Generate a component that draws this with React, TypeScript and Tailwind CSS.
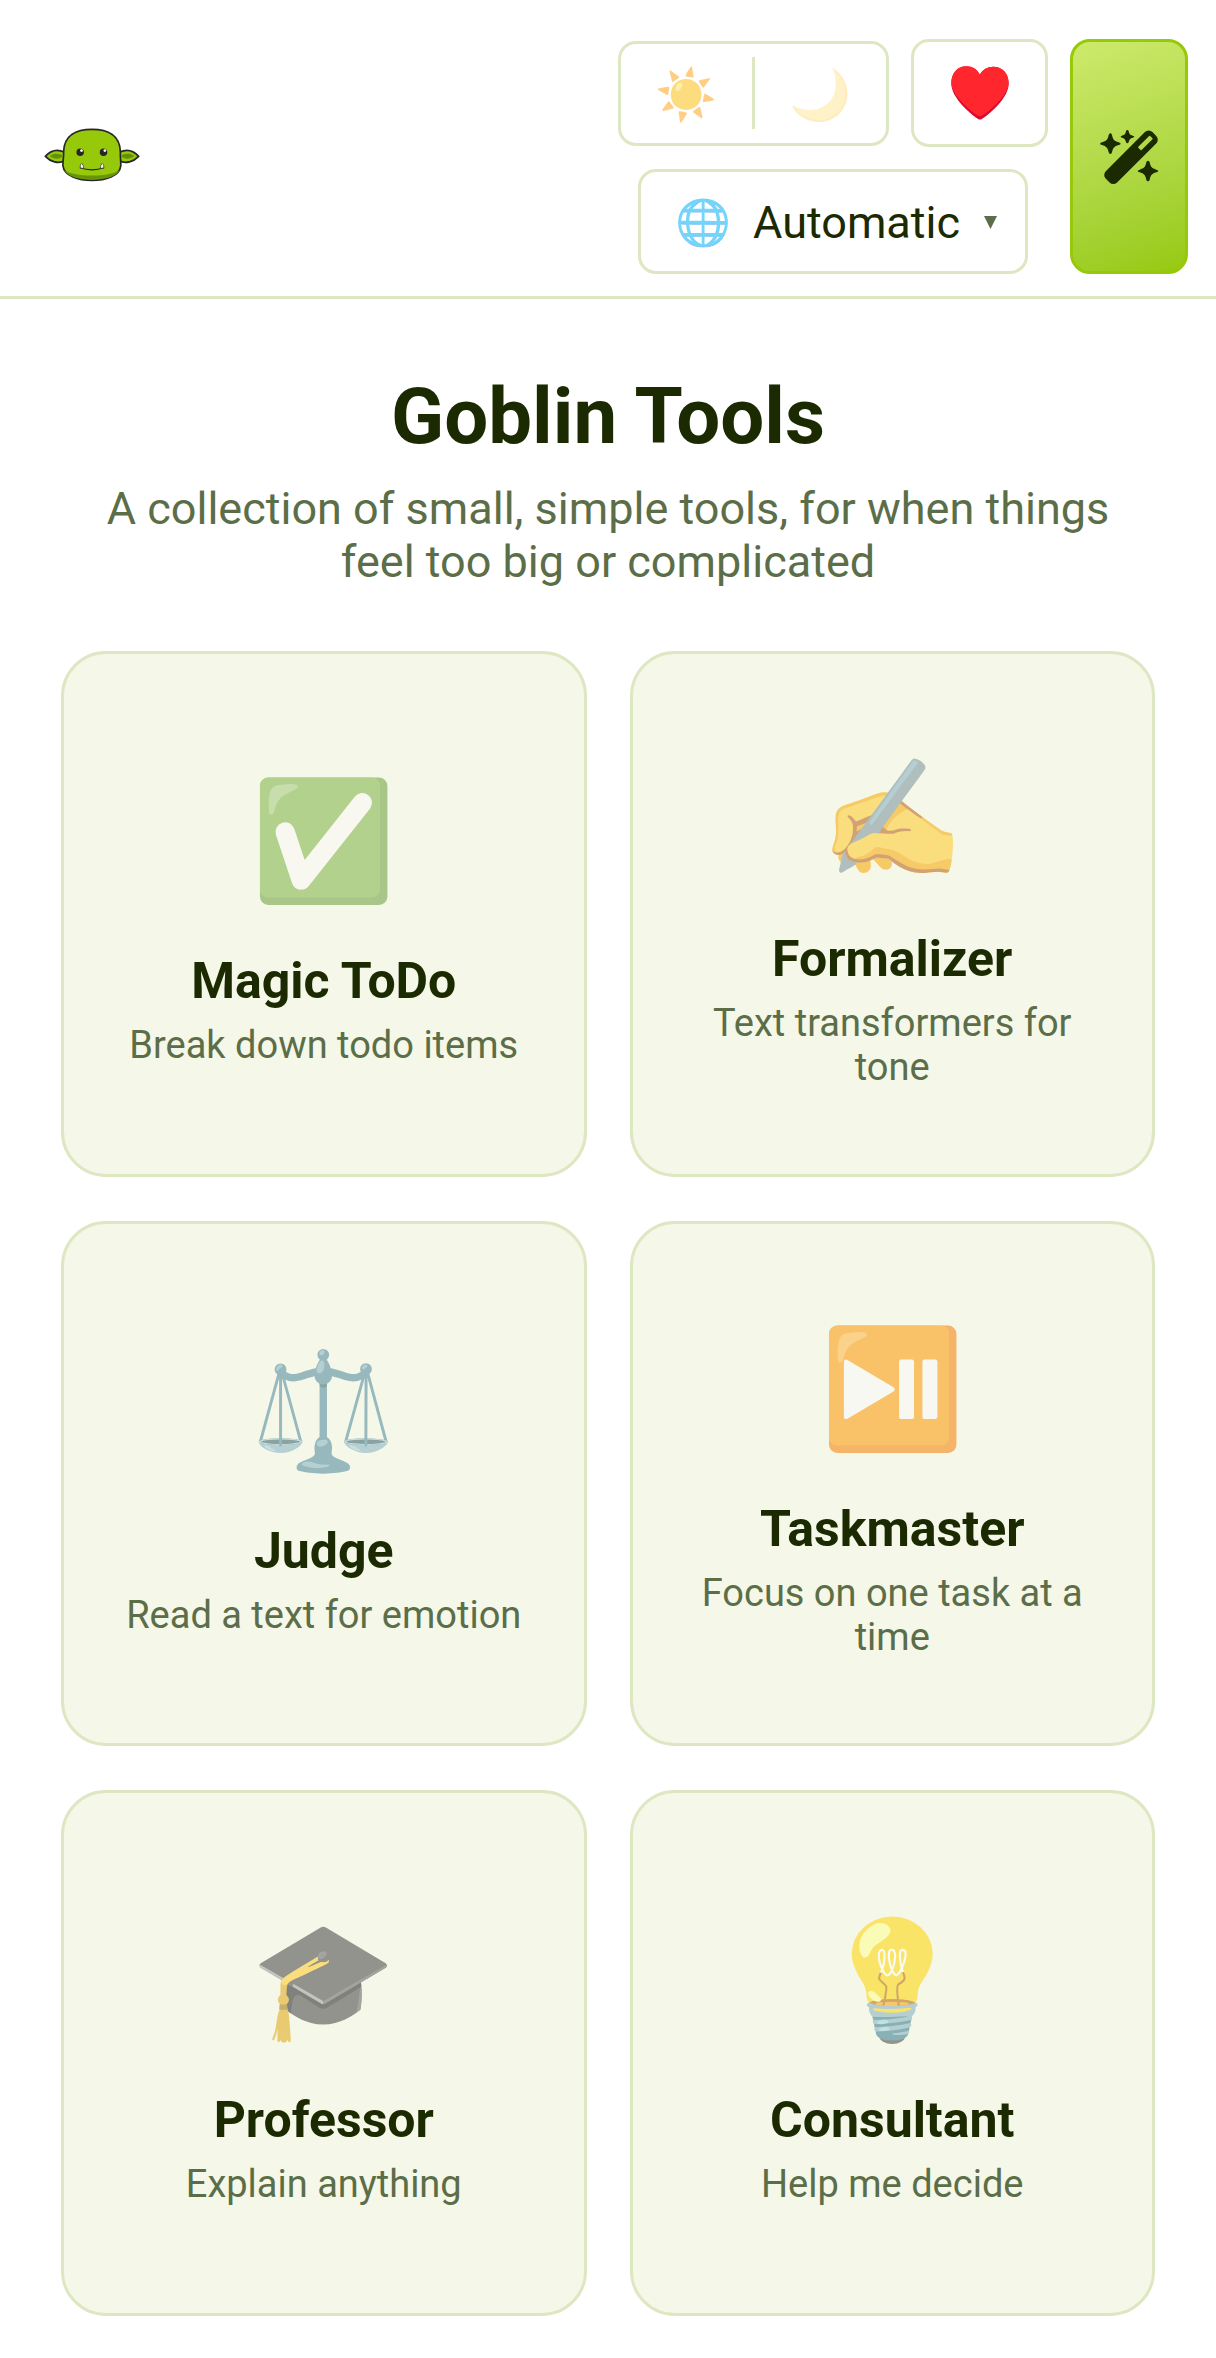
import React, { useState } from "react";

const tools = [
    { icon: "✅", name: "Magic ToDo", text: "Break down todo items" },
    { icon: "✍️", name: "Formalizer", text: "Text transformers for tone" },
    { icon: "⚖️", name: "Judge", text: "Read a text for emotion" },
    { icon: "⏯️", name: "Taskmaster", text: "Focus on one task at a time" },
    { icon: "🎓", name: "Professor", text: "Explain anything" },
    { icon: "💡", name: "Consultant", text: "Help me decide" },
];

const GoblinLogo = () => (
    <svg viewBox="134 80 284 164" className="w-24 h-14" aria-hidden="true">
        <g stroke="#262626" strokeWidth="5" strokeLinejoin="round">
            <path d="M194 153C174 144 153 149 138 166C153 182 176 189 196 179Z" fill="#97c90b" />
            <path d="M358 153C378 144 399 149 414 166C399 182 376 189 356 179Z" fill="#97c90b" />
            <path
                d="M276 86C228 86 193 105 192 153C193 167 189 181 190 194C194 224 236 237 276 237C316 237 358 224 361 194C362 181 359 167 360 153C359 105 324 86 276 86Z"
                fill="#97c90b"
            />
        </g>
        <path d="M151 165C165 155 182 158 190 165C180 176 164 176 151 165Z" fill="#649008" />
        <path d="M401 165C387 155 370 158 362 165C372 176 388 176 401 165Z" fill="#649008" />
        <path d="M194 205C214 229 338 229 358 205C350 228 312 235 276 235C240 235 202 228 194 205Z" fill="#699409" />
        <circle cx="241" cy="154" r="11" fill="#262626" />
        <circle cx="310" cy="154" r="11" fill="#262626" />
        <circle cx="245" cy="149" r="4" fill="#fff" />
        <circle cx="314" cy="149" r="4" fill="#fff" />
        <path d="M240 200Q276 212 312 200" fill="none" stroke="#262626" strokeWidth="3" />
        <path d="M241 200Q240 189 246 187Q252 192 251 202Z" fill="#fff" stroke="#262626" strokeWidth="2" />
        <path d="M311 200Q312 189 306 187Q300 192 301 202Z" fill="#fff" stroke="#262626" strokeWidth="2" />
    </svg>
);

const HeartIcon = () => (
    <svg viewBox="210 143 177 167" className="w-15 h-14" aria-hidden="true">
        <path
            d="M298 172C290 155 275 147 258 147C230 147 213 169 213 199C213 240 270 290 292 303Q298 308 305 303C328 290 384 240 384 199C384 169 366 148 338 148C321 148 306 156 298 172Z"
            fill="#dc0a2d"
        />
        <path
            d="M298 172C290 155 275 147 258 147C230 147 213 169 213 195C213 232 270 280 291 293Q298 298 306 293C328 280 384 232 384 195C384 169 366 148 338 148C321 148 306 156 298 172Z"
            fill="#ff262e"
        />
    </svg>
);

const WandIcon = () => (
    <svg viewBox="651 321 180 174" className="w-15 h-[58px]" fill="#1b2a00" aria-hidden="true">
        <path d="M685 337Q689 337 690 342C693 357 697 360 710 364Q716 366 716 368Q716 370 710 372C697 376 693 380 690 394Q689 399 685 399Q681 399 680 394C677 380 673 376 660 372Q654 370 654 368Q654 366 660 364C673 360 677 357 680 342Q681 337 685 337Z" />
        <path d="M736 327Q739 327 740 331C742 340 744 342 752 344Q757 346 757 347Q757 349 752 350C744 352 742 355 740 363Q739 367 736 367Q733 367 732 363C730 355 728 352 720 350Q716 349 716 347Q716 346 720 344C728 342 730 340 732 331Q733 327 736 327Z" />
        <path d="M798 419Q802 419 803 424C806 439 810 442 823 446Q829 448 829 450Q829 452 823 454C810 458 806 462 803 476Q802 481 798 481Q794 481 793 476C790 462 786 458 773 454Q767 452 767 450Q767 448 773 446C786 442 790 439 793 424Q794 419 798 419Z" />
        <g transform="translate(747 409) rotate(-45)">
            <rect x="-99" y="-24" width="198" height="48" rx="16" />
            <rect x="36" y="-7" width="50" height="14" rx="2" fill="#b4dc42" />
        </g>
    </svg>
);

const ToolCard = ({ icon, name, text }: { icon: string; name: string; text: string }) => (
    <a
        href="#"
        className="aspect-square flex flex-col items-center justify-center px-14 pt-3.5 text-center bg-[#f5f7e9] border-3 border-[#dde7c1] rounded-[45px]"
    >
        <span className="text-[116px] leading-[135px] mb-[42px] opacity-55">{icon}</span>
        <span className="text-[50px] leading-[60px] font-bold">{name}</span>
        <span className="mt-3 text-[38px] leading-[44px] text-[#5b6e48]">{text}</span>
    </a>
);

export default function App() {
    const [theme, setTheme] = useState("light");
    const [language, setLanguage] = useState("auto");

    return (
        <div className="min-h-screen bg-white text-[#1b2a00] font-['Roboto','Noto_Color_Emoji',sans-serif]">
            <header className="flex items-center justify-between px-7 pt-[39px] pb-[22px] border-b-3 border-[#dde7c1]">
                <a href="#" aria-label="Home" className="ml-4 mb-1">
                    <GoblinLogo />
                </a>
                <div className="flex gap-[22px]">
                    <div className="flex flex-col items-center gap-[22px]">
                        <div className="flex items-center gap-[22px]">
                            <div className="flex items-center h-[105px] border-3 border-[#dde7c1] rounded-[18px]">
                                <button
                                    type="button"
                                    aria-label="Light theme"
                                    aria-pressed={theme === "light"}
                                    onClick={() => setTheme("light")}
                                    className="w-[134px] h-[72px] pt-0.5 text-[50px] leading-[72px] border-r-3 border-[#dde7c1]"
                                >
                                    <span className="opacity-55">☀️</span>
                                </button>
                                <button
                                    type="button"
                                    aria-label="Dark theme"
                                    aria-pressed={theme === "dark"}
                                    onClick={() => setTheme("dark")}
                                    className="w-[131px] h-[72px] pt-0.5 text-[50px] leading-[72px]"
                                >
                                    <span className="opacity-25">🌙</span>
                                </button>
                            </div>
                            <button
                                type="button"
                                aria-label="Support"
                                className="flex items-center justify-center w-[137px] h-[108px] border-3 border-[#dde7c1] rounded-[18px]"
                            >
                                <HeartIcon />
                            </button>
                        </div>
                        <label className="flex items-center h-[105px] pl-[34px] pr-7 pt-0.5 border-3 border-[#dde7c1] rounded-[18px]">
                            <span className="text-[45px] leading-[53px] mr-[22px] opacity-55">🌐</span>
                            <select
                                aria-label="Language"
                                value={language}
                                onChange={(e) => setLanguage(e.target.value)}
                                className="appearance-none w-[231px] text-[45px] leading-[53px]"
                            >
                                <option value="auto">Automatic</option>
                                <option value="en">English</option>
                            </select>
                            <svg viewBox="0 0 13 13" className="w-[13px] h-[13px] shrink-0" aria-hidden="true">
                                <path d="M0 0H13L6.5 13Z" fill="#5b6e48" />
                            </svg>
                        </label>
                    </div>
                    <button
                        type="button"
                        aria-label="Tools"
                        className="flex items-center justify-center w-[118px] border-3 border-[#97c90b] rounded-[20px] bg-linear-160 from-[#cdea6b] to-[#97c90b]"
                    >
                        <WandIcon />
                    </button>
                </div>
            </header>

            <main className="px-[61px] pt-[72px] pb-10">
                <h1 className="text-[78px] leading-[92px] font-bold text-center">Goblin Tools</h1>
                <p className="mt-[19px] px-10 text-[45px] leading-[53px] text-center text-[#5b6e48]">
                    A collection of small, simple tools, for when things feel too big or complicated
                </p>
                <div className="mt-[63px] grid grid-cols-2 gap-x-[43px] gap-y-11">
                    {tools.map((tool) => (
                        <ToolCard key={tool.name} {...tool} />
                    ))}
                </div>
            </main>
        </div>
    );
}
